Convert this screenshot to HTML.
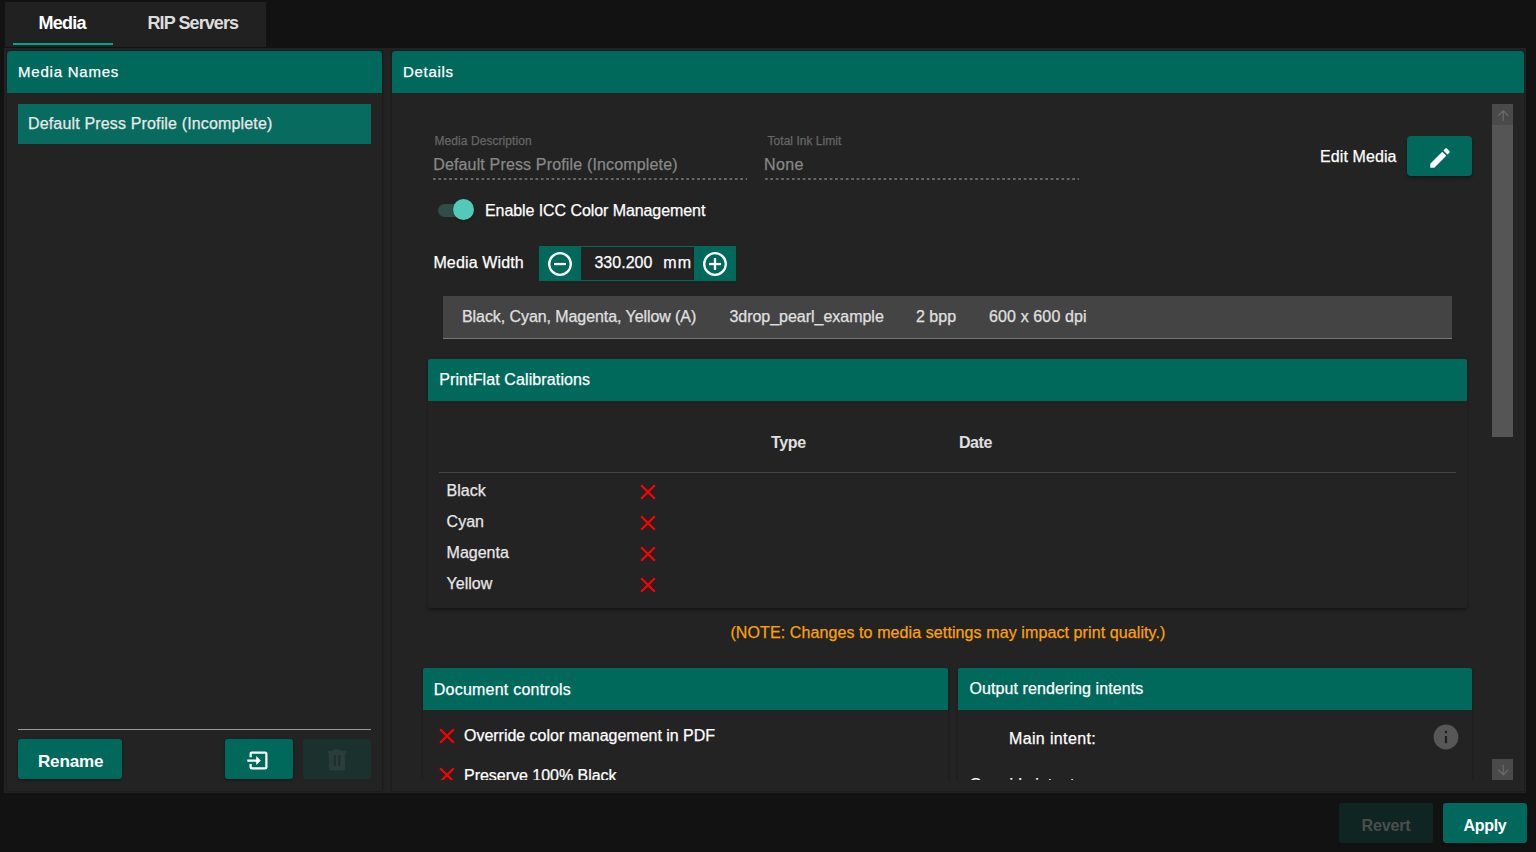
<!DOCTYPE html>
<html><head><meta charset="utf-8">
<style>
*{box-sizing:border-box;margin:0;padding:0}
html,body{width:1536px;height:852px;overflow:hidden;background:#121212;font-family:"Liberation Sans",sans-serif;color:#fff}
.a{position:absolute}
.t{position:absolute;white-space:nowrap;line-height:1;font-size:16px;-webkit-text-stroke:0.25px currentColor}
.teal{background:#00695c}
.hd{border-radius:4px 4px 0 0}
.t[style*="bold"]{-webkit-text-stroke:0}
.dots{height:2px;background-image:linear-gradient(to right,#666 0,#666 2.6px,transparent 2.6px);background-size:5.4px 2px;background-repeat:repeat-x}
</style></head><body>

<!-- tab bar -->
<div class="a" style="left:5px;top:2px;width:261px;height:45px;background:#212121"></div>
<div class="a" style="left:13px;top:43px;width:100px;height:2px;background:#00a592"></div>
<div class="t" style="left:38.5px;top:13.8px;font-size:18px;font-weight:bold;color:#fff;letter-spacing:-0.75px">Media</div>
<div class="t" style="left:147.5px;top:13.8px;font-size:18px;font-weight:bold;color:#ddd;letter-spacing:-0.92px">RIP Servers</div>

<!-- outer container -->
<div class="a" style="left:4px;top:48px;width:1522px;height:745px;background:#222"></div>
<div class="a" style="left:382px;top:51px;width:2px;height:740px;background:#1f1f1f"></div>
<div class="a" style="left:390px;top:51px;width:2px;height:740px;background:#1f1f1f"></div>

<!-- left panel -->
<div class="a" style="left:7px;top:51px;width:375px;height:740px;background:#232323;box-shadow:0 0 0 1px rgba(0,0,0,.13)"></div>
<div class="a teal" style="left:7px;top:51px;width:375px;height:42px;border-radius:4px 4px 0 0"></div>
<div class="t" style="left:18px;top:64.2px;font-size:15px;letter-spacing:0.78px">Media Names</div>
<div class="a" style="left:18px;top:104px;width:353px;height:40px;background:#086b5f"></div>
<div class="t" style="left:28.0px;top:116px;color:#e8e8e8;letter-spacing:0.156px">Default Press Profile (Incomplete)</div>

<div class="a" style="left:18px;top:729px;width:353px;height:1px;background:#9a9a9a"></div>
<div class="a teal" style="left:18px;top:739px;width:104px;height:40px;border-radius:3px;box-shadow:0 1px 3px rgba(0,0,0,.4)"></div>
<div class="t" style="left:38px;top:753px;font-weight:bold;font-size:17px;letter-spacing:-0.16px">Rename</div>
<div class="a teal" style="left:225px;top:739px;width:68px;height:40px;border-radius:3px;box-shadow:0 1px 3px rgba(0,0,0,.4)"></div>
<svg class="a" style="left:245.2px;top:746.5px" width="27" height="27" viewBox="0 0 24 24"><path fill="#fff" d="M14,12L10,8V11H2V13H10V16M20,18V6C20,4.89 19.1,4 18,4H6A2,2 0 0,0 4,6V9H6V6H18V18H6V15H4V18A2,2 0 0,0 6,20H18A2,2 0 0,0 20,18Z"/></svg>
<div class="a" style="left:303px;top:739px;width:68px;height:40px;border-radius:3px;background:#1b312e"></div>
<svg class="a" style="left:323px;top:746px" width="28" height="28" viewBox="0 0 24 24"><path fill="#2a3d3a" d="M9,3V4H4V6H5V19A2,2 0 0,0 7,21H17A2,2 0 0,0 19,19V6H20V4H15V3H9M9,8H11V17H9V8M13,8H15V17H13V8Z"/></svg>

<!-- right panel -->
<div class="a" style="left:392px;top:51px;width:1132px;height:740px;background:#232323;box-shadow:0 0 0 1px rgba(0,0,0,.13)"></div>
<div class="a teal" style="left:392px;top:51px;width:1132px;height:42px;border-radius:4px 4px 0 0"></div>
<div class="t" style="left:403px;top:64.2px;font-size:15px;letter-spacing:0.7px">Details</div>

<!-- scrollbar -->
<div class="a" style="left:1492px;top:104px;width:21px;height:333px;background:#555"></div>
<div class="a" style="left:1492px;top:104px;width:21px;height:20.6px;background:#4a4a4a"></div>
<svg class="a" style="left:1494.6px;top:106.5px" width="16.5" height="16.5" viewBox="0 0 24 24"><path fill="#686868" d="M13,20H11V8L5.5,13.5L4.08,12.08L12,4.16L19.92,12.08L18.5,13.5L13,8V20Z"/></svg>
<div class="a" style="left:1492px;top:759px;width:21px;height:21px;background:#4a4a4a"></div>
<svg class="a" style="left:1494.8px;top:762px" width="16.5" height="16.5" viewBox="0 0 24 24"><path fill="#686868" d="M11,4H13V16L18.5,10.5L19.92,11.92L12,19.84L4.08,11.92L5.5,10.5L11,16V4Z"/></svg>

<div id="content" class="a" style="left:392px;top:104px;width:1100px;height:676px;overflow:hidden">
<div class="a" style="left:-392px;top:-104px;width:1536px;height:852px">
<div class="t" style="left:434.4px;top:135.3px;font-size:12px;color:#666;letter-spacing:0.08px">Media Description</div>
<div class="t" style="left:433.2px;top:156.7px;font-size:16px;color:#888;letter-spacing:0.156px">Default Press Profile (Incomplete)</div>
<div class="a dots" style="left:433px;top:178px;width:314px"></div>
<div class="t" style="left:767.6px;top:135.3px;font-size:12px;color:#666;letter-spacing:0.02px">Total Ink Limit</div>
<div class="t" style="left:764.0px;top:156.7px;font-size:16px;color:#888;letter-spacing:0.35px">None</div>
<div class="a dots" style="left:765px;top:178px;width:314px"></div>
<div class="t" style="left:1320.0px;top:148.5px;font-size:16px;color:#fff;letter-spacing:0.1px">Edit Media</div>
<div class="a teal" style="left:1407px;top:136px;width:65px;height:40px;border-radius:4px;box-shadow:0 2px 3px rgba(0,0,0,.35)"></div>
<svg class="a" style="left:1426.5px;top:144.7px" width="26" height="26" viewBox="0 0 24 24"><path fill="#fff" d="M20.71,7.04C21.1,6.65 21.1,6 20.71,5.63L18.37,3.29C18,2.9 17.35,2.9 16.96,3.29L15.12,5.12L18.87,8.87M3,17.25V21H6.75L17.81,9.93L14.06,6.18L3,17.25Z"/></svg>
<div class="a" style="left:438px;top:203.5px;width:36px;height:13px;border-radius:7px;background:#2f4e48"></div>
<div class="a" style="left:453px;top:199px;width:21.4px;height:21.4px;border-radius:50%;background:#52c9b9;box-shadow:0 1px 2px rgba(0,0,0,.4)"></div>
<div class="t" style="left:485.0px;top:203.1px;font-size:16px;color:#fff;letter-spacing:-0.077px">Enable ICC Color Management</div>
<div class="t" style="left:433.4px;top:254.8px;font-size:16px;color:#fff;letter-spacing:0.14px">Media Width</div>
<div class="a teal" style="left:539px;top:246px;width:197px;height:35px"></div>
<div class="a" style="left:581px;top:247px;width:113px;height:33px;background:#222"></div>
<svg class="a" style="left:547px;top:251px" width="26" height="26" viewBox="0 0 26 26"><circle cx="13" cy="13" r="10.8" fill="none" stroke="#fff" stroke-width="2.3"/><rect x="7" y="11.9" width="12" height="2.3" fill="#fff"/></svg>
<svg class="a" style="left:702px;top:251px" width="26" height="26" viewBox="0 0 26 26"><circle cx="13" cy="13" r="10.8" fill="none" stroke="#fff" stroke-width="2.3"/><rect x="7" y="11.9" width="12" height="2.3" fill="#fff"/><rect x="11.85" y="7" width="2.3" height="12" fill="#fff"/></svg>
<div class="t" style="left:594.4px;top:255.2px;font-size:16px;color:#fff;letter-spacing:0.03px">330.200</div>
<div class="t" style="left:663.3px;top:255.2px;font-size:16px;color:#fff;letter-spacing:1.2px">mm</div>
<div class="a" style="left:443px;top:296px;width:1009px;height:43px;background:#444;border-bottom:1px solid #777"></div>
<div class="t" style="left:462.0px;top:309.4px;font-size:16px;color:#e0e0e0;letter-spacing:-0.074px">Black, Cyan, Magenta, Yellow (A)</div>
<div class="t" style="left:729.4px;top:309.4px;font-size:16px;color:#e0e0e0;letter-spacing:-0.02px">3drop_pearl_example</div>
<div class="t" style="left:916.0px;top:309.4px;font-size:16px;color:#e0e0e0;letter-spacing:0px">2 bpp</div>
<div class="t" style="left:989.0px;top:309.4px;font-size:16px;color:#e0e0e0;letter-spacing:0.125px">600 x 600 dpi</div>
<div class="a" style="left:428px;top:359px;width:1039px;height:249px;background:#232323;border-radius:2px;box-shadow:0 2px 3px rgba(0,0,0,.4)"></div>
<div class="a teal" style="left:428px;top:359px;width:1039px;height:42px;border-radius:2px 2px 0 0"></div>
<div class="t" style="left:439.2px;top:372.0px;font-size:16px;color:#fff;letter-spacing:0.114px">PrintFlat Calibrations</div>
<div class="t" style="left:771.0px;top:434.9px;font-size:16px;color:#e0e0e0;font-weight:bold;letter-spacing:-0.33px">Type</div>
<div class="t" style="left:959.0px;top:434.9px;font-size:16px;color:#e0e0e0;font-weight:bold;letter-spacing:-0.43px">Date</div>
<div class="a" style="left:439px;top:472px;width:1017px;height:1px;background:#444"></div>
<div class="t" style="left:446.6px;top:482.8px;font-size:16px;color:#e8e8e8;">Black</div>
<svg class="a" style="left:634.5px;top:478.5px" width="26" height="26" viewBox="0 0 24 24"><path fill="#ff0000" d="M19,6.41L17.59,5L12,10.59L6.41,5L5,6.41L10.59,12L5,17.59L6.41,19L12,13.41L17.59,19L19,17.59L13.41,12L19,6.41Z"/></svg>
<div class="t" style="left:446.6px;top:513.8px;font-size:16px;color:#e8e8e8;">Cyan</div>
<svg class="a" style="left:634.5px;top:509.5px" width="26" height="26" viewBox="0 0 24 24"><path fill="#ff0000" d="M19,6.41L17.59,5L12,10.59L6.41,5L5,6.41L10.59,12L5,17.59L6.41,19L12,13.41L17.59,19L19,17.59L13.41,12L19,6.41Z"/></svg>
<div class="t" style="left:446.6px;top:544.8px;font-size:16px;color:#e8e8e8;">Magenta</div>
<svg class="a" style="left:634.5px;top:540.5px" width="26" height="26" viewBox="0 0 24 24"><path fill="#ff0000" d="M19,6.41L17.59,5L12,10.59L6.41,5L5,6.41L10.59,12L5,17.59L6.41,19L12,13.41L17.59,19L19,17.59L13.41,12L19,6.41Z"/></svg>
<div class="t" style="left:446.6px;top:575.8px;font-size:16px;color:#e8e8e8;">Yellow</div>
<svg class="a" style="left:634.5px;top:571.5px" width="26" height="26" viewBox="0 0 24 24"><path fill="#ff0000" d="M19,6.41L17.59,5L12,10.59L6.41,5L5,6.41L10.59,12L5,17.59L6.41,19L12,13.41L17.59,19L19,17.59L13.41,12L19,6.41Z"/></svg>
<div class="t" style="left:730.4px;top:624.8px;font-size:16px;color:#fba10a;letter-spacing:0.1px">(NOTE: Changes to media settings may impact print quality.)</div>
<div class="a" style="left:423px;top:668px;width:525px;height:200px;background:#232323;border-radius:2px;box-shadow:0 2px 3px rgba(0,0,0,.4)"></div>
<div class="a teal" style="left:423px;top:668px;width:525px;height:42px;border-radius:2px 2px 0 0"></div>
<div class="t" style="left:433.8px;top:681.5px;font-size:16px;color:#fff;letter-spacing:0.225px">Document controls</div>
<svg class="a" style="left:433.5px;top:722.5px" width="26" height="26" viewBox="0 0 24 24"><path fill="#ff0000" d="M19,6.41L17.59,5L12,10.59L6.41,5L5,6.41L10.59,12L5,17.59L6.41,19L12,13.41L17.59,19L19,17.59L13.41,12L19,6.41Z"/></svg>
<div class="t" style="left:464.0px;top:727.9px;font-size:16px;color:#fff;letter-spacing:-0.02px">Override color management in PDF</div>
<svg class="a" style="left:433.5px;top:761.6px" width="26" height="26" viewBox="0 0 24 24"><path fill="#ff0000" d="M19,6.41L17.59,5L12,10.59L6.41,5L5,6.41L10.59,12L5,17.59L6.41,19L12,13.41L17.59,19L19,17.59L13.41,12L19,6.41Z"/></svg>
<div class="t" style="left:464.0px;top:768.0px;font-size:16px;color:#fff;letter-spacing:-0.02px">Preserve 100% Black</div>
<div class="a" style="left:958px;top:668px;width:514px;height:200px;background:#232323;border-radius:2px;box-shadow:0 2px 3px rgba(0,0,0,.4)"></div>
<div class="a teal" style="left:958px;top:668px;width:514px;height:42px;border-radius:2px 2px 0 0"></div>
<div class="t" style="left:969.4px;top:680.7px;font-size:16px;color:#fff;letter-spacing:0.1px">Output rendering intents</div>
<div class="t" style="left:1009.0px;top:730.5px;font-size:16px;color:#fff;letter-spacing:0.36px">Main intent:</div>
<svg class="a" style="left:1433px;top:724px" width="26" height="26" viewBox="0 0 26 26"><circle cx="13" cy="13" r="12.4" fill="#575757"/><rect x="11.9" y="12" width="2.2" height="7.2" fill="#1f1f1f"/><rect x="11.9" y="6.8" width="2.2" height="2.4" rx="0.6" fill="#1f1f1f"/></svg>
<div class="t" style="left:969.5px;top:776.5px;font-size:16px;color:#fff;letter-spacing:0px">Override intent:</div>
</div>
</div>

<!-- bottom buttons -->
<div class="a" style="left:1339px;top:803px;width:94px;height:40px;border-radius:3px;background:#0e2522"></div>
<div class="t" style="left:1361.5px;top:817.5px;font-weight:bold;font-size:16px;color:#4d4d4d;letter-spacing:-0.14px">Revert</div>
<div class="a teal" style="left:1443px;top:803px;width:84px;height:40px;border-radius:3px;box-shadow:0 1px 3px rgba(0,0,0,.45)"></div>
<div class="t" style="left:1463.4px;top:817.5px;font-weight:bold;font-size:16px;letter-spacing:-0.27px">Apply</div>

</body></html>
